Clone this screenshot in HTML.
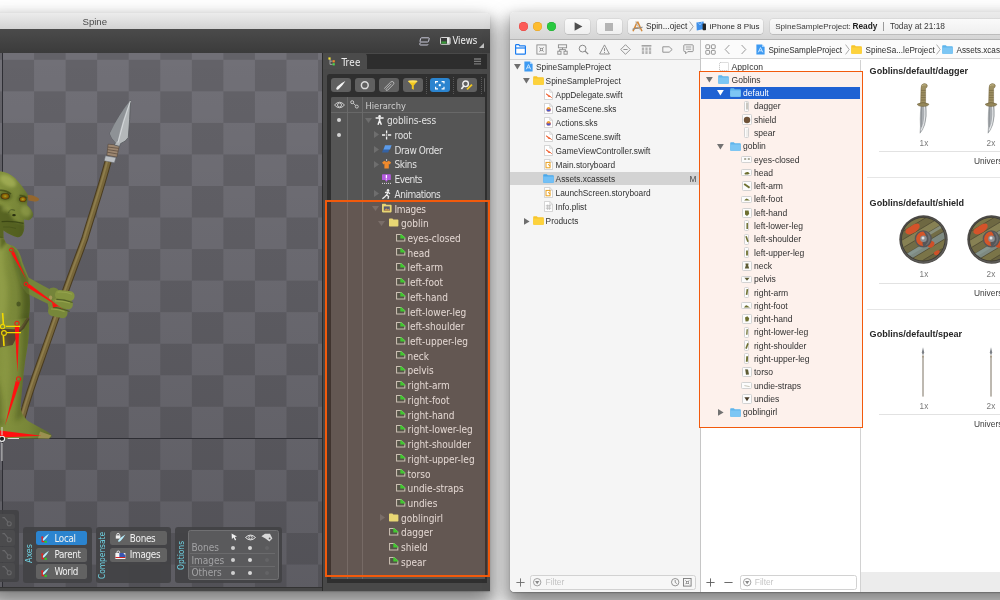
<!DOCTYPE html>
<html><head><meta charset="utf-8"><title>Spine and Xcode</title>
<style>
*{box-sizing:border-box;margin:0;padding:0}
html,body{width:1000px;height:600px;overflow:hidden;background:#fff}
body{position:relative;font-family:"Liberation Sans",sans-serif}
#root{position:absolute;left:0;top:0;width:1000px;height:600px;overflow:hidden;will-change:transform;background:#fff}
.a{position:absolute}
svg{position:absolute;overflow:visible}
.sf{font-family:"DejaVu Sans Condensed","DejaVu Sans",sans-serif}
/* ---------- Spine ---------- */
#spine{left:-10px;top:12.5px;width:500px;height:578px;border-radius:0 4.5px 0 0;background:linear-gradient(#ececec 0 12px,#474747 12px);box-shadow:0 12px 22px 3px rgba(0,0,0,.38),0 7px 12px 4px rgba(0,0,0,.17),0 1px 1.5px rgba(0,0,0,.2)}
#sp-title{left:0;top:12.5px;width:490px;height:16.5px;border-radius:0 4.5px 0 0;background:linear-gradient(#ececec,#d3d3d3);font-size:9.6px;color:#4a4a4a;line-height:17px}
#sp-bar{left:0;top:29px;width:490px;height:24px;background:linear-gradient(#4b4b4b,#3b3b3b)}
#canvas{left:0;top:53px;width:322.5px;height:534px;overflow:hidden;
background:linear-gradient(rgba(0,0,0,0),rgba(4,4,8,.18)),conic-gradient(#717077 25%,#636268 0 50%,#717077 0 75%,#636268 0);background-size:100% 100%,63.12px 63.1px;background-position:0 0,2.5px 6.8px}
#cbot{left:0;top:587px;width:490px;height:3.5px;background:linear-gradient(#333 0 1.2px,#474747 1.2px)}
.pnl{background:rgba(66,66,68,.92);border-radius:3px}
.btn{background:#626262;border-radius:2.5px;color:#f0f0f0;font-size:9.8px;line-height:14px;white-space:nowrap;letter-spacing:-.3px}
.btn.on{background:#2b84cf}
.vt{color:#6fd3e3;font-size:9px;line-height:10px;white-space:nowrap;transform:rotate(-90deg);transform-origin:0 0}
/* tree */
#tp{left:322.2px;top:53px;width:167.8px;height:537.5px;background:#494949;border-left:1px solid #2c2c2c}
#tabbar{left:323.5px;top:53.6px;width:163.6px;height:15.2px;background:#2d2d2d}
#tab{left:323.2px;top:53.4px;width:43.6px;height:15.4px;background:#4b4b4b;border-radius:2px 4px 0 0;color:#eee;font-size:9.8px;line-height:15px;letter-spacing:.3px}
#tin{left:327px;top:73.8px;width:160.4px;height:509.6px;background:#2f2f2f;border-radius:2.5px 0 0 0}
#tbl{left:331.2px;top:97px;width:154px;height:482px;background:#555;border-radius:2px 0 0 0}
#thead{left:331.2px;top:97px;width:154px;height:15.6px;background:#565656;border-bottom:1px solid #686868;border-radius:2px 0 0 0}
.cl{width:1px;top:97.2px;height:481.8px;background:#6a6a6a}
.tb{top:78px;height:14.4px;width:19.6px;background:#606060;border-radius:3px}
.tsep{top:77px;height:17px;width:0;border-left:1px dotted #585858}
.tr{height:14.72px;line-height:14.72px;font-size:10px;color:#e2e2e2;white-space:nowrap;padding-top:1.6px}
.dot{width:4.2px;height:4.2px;border-radius:50%;background:#d4d4d4}

/* ---------- Xcode ---------- */
#xwin{left:509.6px;top:12.2px;width:520px;height:579.8px;border-radius:4.5px;background:#fff;box-shadow:0 12px 22px 3px rgba(0,0,0,.36),0 7px 12px 4px rgba(0,0,0,.17),0 1px 1.5px rgba(0,0,0,.26)}
#xtb{left:509.6px;top:12.2px;width:491px;height:27.6px;border-radius:4.5px 0 0 0;background:linear-gradient(#ebebeb,#d5d5d5);border-bottom:1px solid #b4b4b4}
#xnav{left:509.6px;top:39.8px;width:190.6px;height:552.2px;background:#f5f5f5;border-radius:0 0 0 4.5px}
.xb{top:18.8px;height:15.2px;border-radius:3px;background:linear-gradient(#fafafa,#efefef);box-shadow:0 0 0 .5px rgba(0,0,0,.10),0 .6px .6px rgba(0,0,0,.16)}
.xt{font-size:8.3px;line-height:14px;height:14px;color:#303030;white-space:nowrap;padding-top:.3px}
.xa{font-size:8.55px;line-height:13.3px;height:13.3px;color:#303030;white-space:nowrap;padding-top:.8px}
.xh{font-size:9.05px;font-weight:bold;color:#262626;white-space:nowrap;line-height:12px}
.xs{font-size:8.2px;color:#7a7a7a;white-space:nowrap;line-height:10px}
.xu{font-size:8.4px;color:#3a3a3a;white-space:nowrap;line-height:10px}
.hl{height:1px;background:#e2e2e2}
.flt{height:14.4px;border:1px solid #d2d2d2;border-radius:2.5px;background:#f7f7f7}
</style></head>
<body>
<div id="root">
<div id="spine" class="a"></div>
<div id="sp-title" class="a"><span class="a" style="left:82.5px;top:0">Spine</span></div>
<div id="sp-bar" class="a"></div>
<div id="canvas" class="a">
<svg class="a" style="left:0;top:0" width="323" height="534" viewBox="0 53 323 534"><defs><linearGradient id="sk" x1="0" x2="1" y1="0" y2="0"><stop offset="0" stop-color="#84923e"/><stop offset=".55" stop-color="#788638"/><stop offset="1" stop-color="#5c6a2a"/></linearGradient><linearGradient id="shaft" x1="0" x2="1" y1="0" y2="0"><stop offset="0" stop-color="#5e4c28"/><stop offset=".35" stop-color="#9a8448"/><stop offset="1" stop-color="#6e5a30"/></linearGradient><radialGradient id="eye"><stop offset="0" stop-color="#fff0a0"/><stop offset=".35" stop-color="#ffc000"/><stop offset="1" stop-color="#b05000"/></radialGradient><filter id="bl" x="-30%" y="-30%" width="160%" height="160%"><feGaussianBlur stdDeviation="1.6"/></filter><filter id="bl2" x="-30%" y="-30%" width="160%" height="160%"><feGaussianBlur stdDeviation="2.4"/></filter><clipPath id="hd"><path d="M0 171.2Q8 171.8 15 178Q22 185.4 27.8 194.6L27 205Q32.6 210.6 33.2 214Q33 218.4 28.6 220.2L24 219.6L24.2 224Q24.6 230 23.2 232.4Q21.4 237.4 17.4 237.2Q11 236 3.4 230.6L3.6 238L0 238Z"/></clipPath><clipPath id="bd"><path d="M0 236L3.4 237.6L6 243L12 246L17.6 252L22 266L28.4 279L29.6 296Q30.6 308 28.8 317.6L29 318C30 335 27 350 25 362C23 376 22 392 20.4 406C20.6 412 23 416 28 421C36 426 46 430 50.6 434C53 436.4 51 438.6 47 438.6H0Z"/></clipPath></defs><path d="M2.5 53V587" stroke="#2e2e34" stroke-width="1"/><path d="M0 438.5H322.5" stroke="#2e2e34" stroke-width="1"/><path d="M109 158C100 192 92 214 85 238C80 252 76 262 72.4 272C62 300 50 335 41 360C33 382 27 400 22 418" fill="none" stroke="#4a3c20" stroke-width="7" stroke-linecap="butt"/><path d="M109 158C100 192 92 214 85 238C80 252 76 262 72.4 272C62 300 50 335 41 360C33 382 27 400 22 418" fill="none" stroke="#78673b" stroke-width="5"/><path d="M108.2 158C99.2 192 91.2 214 84.2 238C79.2 252 75.2 262 71.6 272C61.2 300 49.2 335 40.2 360C32.2 382 26.2 400 21.2 418" fill="none" stroke="#8e7d4c" stroke-width="1.8"/><path d="M108.1 144.2L119.4 145.2L116.9 157L106.9 155.2Z" fill="#9c8670" stroke="#4e4034" stroke-width=".5"/><path d="M107.8 147L118.8 148.4M107.5 149.6L118.2 151.2M107.2 152.2L117.6 154" stroke="#5e4e40" stroke-width=".8"/><path d="M105.4 155.8L116 157.6L114.4 162.8L104.2 160.8Z" fill="#bcc0c4" stroke="#60646a" stroke-width=".5"/><path d="M130.6 100Q129.8 120 128.3 137.5Q126 141.6 120.6 143.6L119.6 146.4L114.4 145L115.6 142.4Q111.4 138.6 109.8 133.4Q118 116 130.6 100Z" fill="#b4b8ba" stroke="#54585c" stroke-width=".8" stroke-linejoin="round"/><path d="M130.6 100Q118 116 109.8 133.4Q111.4 138.6 115.6 142.4L117.8 141Q122 120 130.6 100Z" fill="#8e9296"/><path d="M130.4 101Q123 122 118 142.6" stroke="#dcdfe2" stroke-width=".8" fill="none"/><path d="M0 318H29C30 335 27 350 25 362C23 376 22 392 20.4 406C20.6 412 23 416 28 421C36 426 46 430 50.6 434C53 436.4 51 438.6 47 438.6H0Z" fill="url(#sk)"/><path d="M40 431.5L51.4 435.6L49 438.4L38 438.2Z" fill="#9a9050"/><path d="M0 328.6L19 329.4L22.4 325L28.8 315.4L29.4 319.6L24 328.4L19.4 332.6L12.6 345L0 347.4Z" fill="#56482e"/><path d="M28.8 315.4L29.4 317.4L21 329.6L19 329.4Z" fill="#6e5c3c"/><path d="M0 236L3.4 237.6L6 243L12 246L17.6 252L22 266L28.4 279L29.6 296Q30.6 308 28.8 317.6L0 322Z" fill="url(#sk)"/><ellipse cx="18.6" cy="304" rx="2.2" ry="2.6" fill="#4e5a24"/><path d="M11 245Q19 247 22.4 262L28.6 277.4Q38 283 49.4 289L48.4 304Q36 298 27 293.4Q20 286 15 270Z" fill="#75853a"/><path d="M47.6 296Q47 290 50.6 288Q54.6 286.4 57.6 289Q59.6 291 58.8 294.6L58 300L50 312Q47 306 47.6 296Z" fill="#74843a"/><rect x="55" y="290.6" width="19.6" height="9.6" rx="4.4" fill="#84943f" transform="rotate(7 65 295)"/><rect x="52.4" y="298.8" width="20.6" height="9.6" rx="4.4" fill="#7e8e3c" transform="rotate(9 62 303)"/><rect x="48" y="306.6" width="19.6" height="10.6" rx="4.8" fill="#77873a" transform="rotate(12 58 312)"/><path d="M56.4 299.4Q64 299.4 72.6 302.6M53 307.4Q60 307.6 69.6 311.6" fill="none" stroke="#4e5c24" stroke-width="1.1"/><path d="M57.6 292.2Q65 291.4 72 294.2M55 300.8Q62 300.6 70 303M51 309Q58 308.8 64.6 311.6" fill="none" stroke="#98a650" stroke-width="1.2" opacity=".8"/><ellipse cx="50.6" cy="297.6" rx="1.6" ry="2.2" fill="#a89858"/><path d="M0 171.2Q8 171.8 15 178Q22 185.4 27.8 194.6L27 205Q32.6 210.6 33.2 214Q33 218.4 28.6 220.2L24 219.6L24.2 224Q24.6 230 23.2 232.4Q21.4 237.4 17.4 237.2Q11 236 3.4 230.6L3.6 238L0 238Z" fill="url(#sk)"/><path d="M27.6 195Q34 194.4 39 198.8Q39.4 201 36 201.4Q31 201.6 28.4 200.6Z" fill="#94672e"/><path d="M0 190.4Q6 190 11 194M19.6 195.6Q24 195 27 198" fill="none" stroke="#4e5a22" stroke-width="1.6"/><ellipse cx="5.2" cy="196.2" rx="4.6" ry="3.2" fill="#3c3c14"/><ellipse cx="5.2" cy="196.2" rx="3.8" ry="2.7" fill="url(#eye)"/><ellipse cx="22.8" cy="199.2" rx="3.7" ry="2.8" fill="#3c3c14"/><ellipse cx="22.8" cy="199.2" rx="3" ry="2.3" fill="url(#eye)"/><path d="M8.4 213Q10 207.8 15 210.6" fill="none" stroke="#56642a" stroke-width="1.2"/><ellipse cx="14" cy="215.2" rx="1.8" ry="1.1" fill="#2a3010"/><path d="M1.6 221.6Q12 220.6 23.6 223.4" fill="none" stroke="#434f1c" stroke-width="1.1"/><path d="M3 227Q10 226.4 16 228.4" fill="none" stroke="#4e5a22" stroke-width=".8" opacity=".7"/><g clip-path="url(#hd)"><path d="M-4 204Q6 206 10 214Q14 224 24 223L26 240L-4 242Z" fill="#34400f" opacity=".55" filter="url(#bl)"/><ellipse cx="5" cy="196" rx="7" ry="4.6" fill="#34400f" opacity=".5" filter="url(#bl)"/><ellipse cx="22.6" cy="199" rx="5" ry="3.6" fill="#34400f" opacity=".45" filter="url(#bl)"/><ellipse cx="8" cy="181" rx="9" ry="5" fill="#aab65c" opacity=".7" filter="url(#bl)" transform="rotate(30 8 181)"/><ellipse cx="26" cy="211" rx="5" ry="6" fill="#9aa650" opacity=".6" filter="url(#bl)" transform="rotate(-30 26 211)"/><ellipse cx="6" cy="209" rx="4.6" ry="3" fill="#98a44e" opacity=".5" filter="url(#bl)"/></g><g clip-path="url(#bd)"><path d="M-4 240L4 240Q2 262 7 282Q9 300 5 320L-4 322Z" fill="#a4b058" opacity=".4" filter="url(#bl2)"/><path d="M13 246L22 266L29.6 282Q32 308 30 320L21 320Q25 300 21 284Q16 268 11 250Z" fill="#34400f" opacity=".4" filter="url(#bl2)"/><path d="M31 318Q31 350 26 380Q24 400 23 416L15 422Q18 400 20 380Q22 350 22 318Z" fill="#34400f" opacity=".38" filter="url(#bl2)"/><path d="M-4 376Q6 400 3 424L-4 428Z" fill="#34400f" opacity=".4" filter="url(#bl2)"/><path d="M2 330Q12 350 10 376Q6 400 8 420L0 420Z" fill="#98a44e" opacity=".35" filter="url(#bl2)"/><path d="M0 236L8 240Q4 246 0 250Z" fill="#34400f" opacity=".5" filter="url(#bl)"/></g><path d="M11.1 253.0L26.6 280.0L14.0 251.5Z" fill="#ff1010"/><circle cx="11.4" cy="250" r="1.9" fill="none" stroke="#ff1010" stroke-width="1"/><path d="M27.0 286.9L64.0 310.0L29.1 283.9Z" fill="#ff1010"/><circle cx="26" cy="284" r="1.9" fill="none" stroke="#ff1010" stroke-width="1"/><path d="M52 302.6L58.4 306.2L53 307.6Z" fill="#ff1010"/><path d="M14.7 326.2L17.4 372.0L19.3 326.2Z" fill="#ff1010"/><circle cx="17" cy="323.4" r="2.2" fill="none" stroke="#ff1010" stroke-width="1"/><path d="M15.7 381.1L5.0 425.6L19.9 382.3Z" fill="#ff1010"/><circle cx="18.6" cy="379" r="2.2" fill="none" stroke="#ff1010" stroke-width="1"/><path d="M0 430.6L41.6 435.8L0 437.6Z" fill="#ff1010"/><path d="M2.6 313L3.4 324M3.4 336L4 346" stroke="#f2d800" stroke-width="1.6"/><path d="M6 326.4H20M7 332.6H21" stroke="#f2d800" stroke-width="1.2"/><circle cx="2.6" cy="326.6" r="2.2" fill="none" stroke="#f2d800" stroke-width="1.1"/><circle cx="4" cy="333" r="2.4" fill="none" stroke="#f2d800" stroke-width="1.1"/><path d="M2 427V435M2 443V461M7.6 438.5H19" stroke="#d8d8d8" stroke-width="1"/><circle cx="2" cy="438.8" r="2.6" fill="#222" stroke="#f4f4f4" stroke-width="1.1"/></svg>
</div>
<div id="cbot" class="a"></div>
<div id="tp" class="a"></div><div id="tabbar" class="a"></div>
<div id="tab" class="a sf"><span class="a" style="left:18.2px;top:1.2px">Tree</span></div>
<div id="tin" class="a"></div>
<div class="tb a" style="left:331.3px"></div><div class="tb a" style="left:355px"></div><div class="tb a" style="left:379px"></div><div class="tb a" style="left:403px"></div><div class="tb a" style="left:430px;background:#2b84cf"></div><div class="tb a" style="left:457px"></div><div class="tb a" style="left:483.7px;width:1.8px;border-radius:3px 0 0 3px"></div><div class="tsep a" style="left:426px"></div><div class="tsep a" style="left:453.4px"></div><div class="tsep a" style="left:480.6px"></div>
<div id="tbl" class="a"></div><div id="thead" class="a"></div>
<div class="cl a" style="left:347px"></div><div class="cl a" style="left:362.3px"></div>
<div class="tr sf a" style="left:365.5px;top:97.4px;color:#d0d0d0;font-size:9.3px">Hierarchy</div>
<div class="dot a" style="left:337.1px;top:118.30px"></div><svg class="a" style="left:364.5px;top:118.0px" width="7" height="5" viewBox="0 0 7 5"><path d="M0 0H7L3.5 5Z" fill="#6e6e6e"/></svg><svg class="a" style="left:375px;top:115.0px" width="10" height="10" viewBox="0 0 10 10"><circle cx="4.6" cy="1.3" r="1.25" fill="#f2f2f2"/><path d="M0.6 3.1H8.6M4.6 2.6V6M4.6 5.6L3 9.8M4.6 5.6L6.4 9.8" stroke="#f2f2f2" stroke-width="1.5" fill="none"/></svg><div class="tr sf a" style="left:387px;top:112.64px;letter-spacing:-0.14px">goblins-ess</div>
<div class="dot a" style="left:337.1px;top:133.02px"></div><svg class="a" style="left:373.5px;top:131.22px" width="5" height="7" viewBox="0 0 5 7"><path d="M0 0L5 3.5L0 7Z" fill="#6e6e6e"/></svg><svg class="a" style="left:382px;top:129.72px" width="10" height="10" viewBox="0 0 10 10"><path d="M0 5H3.2M6 5H9.2M4.6 0.4V3.4M4.6 6.6V9.6" stroke="#f4f4f4" stroke-width="1.3"/><rect x="4" y="4.4" width="1.2" height="1.2" fill="#f4f4f4"/></svg><div class="tr sf a" style="left:394.5px;top:127.36px;letter-spacing:-0.25px">root</div>
<svg class="a" style="left:373.5px;top:145.94000000000003px" width="5" height="7" viewBox="0 0 5 7"><path d="M0 0L5 3.5L0 7Z" fill="#6e6e6e"/></svg><svg class="a" style="left:382px;top:144.44px" width="10" height="10" viewBox="0 0 10 10"><path d="M1.4 4.6L0 8.4H6.2L7.6 4.6Z" fill="#3462a4"/><path d="M3 1.2L1.6 5.6H8L9.6 1.2Z" fill="#5b9bea"/></svg><div class="tr sf a" style="left:394.5px;top:142.08px;letter-spacing:-0.42px">Draw Order</div>
<svg class="a" style="left:373.5px;top:160.66000000000003px" width="5" height="7" viewBox="0 0 5 7"><path d="M0 0L5 3.5L0 7Z" fill="#6e6e6e"/></svg><svg class="a" style="left:382px;top:159.16px" width="10" height="10" viewBox="0 0 10 10"><path d="M4.6 0V2" stroke="#ddd" stroke-width=".8"/><path d="M0.2 3.2L2.6 1.8Q4.6 3.6 6.6 1.8L9 3.2L8 5.4L6.8 4.8V9.4H2.4V4.8L1.2 5.4Z" fill="#f08a2c"/></svg><div class="tr sf a" style="left:394.5px;top:156.80px;letter-spacing:-0.36px">Skins</div>
<svg class="a" style="left:382px;top:173.88px" width="10" height="10" viewBox="0 0 10 10"><path d="M0.6 0.2H8.2Q8.8 .2 8.8 .8V5.4Q8.8 6 8.2 6H5.8L4.4 8L3 6H0.6Q0 6 0 5.4V.8Q0 .2 .6 .2Z" fill="#b45be0"/><path d="M4.4 1V4" stroke="#fff" stroke-width="1.3"/><rect x="3.8" y="4.6" width="1.2" height="1" fill="#fff"/><path d="M0 9.4H9.4" stroke="#ddd" stroke-width="1" stroke-dasharray="1 1"/></svg><div class="tr sf a" style="left:394.5px;top:171.52px;letter-spacing:-0.5px">Events</div>
<svg class="a" style="left:373.5px;top:190.10000000000002px" width="5" height="7" viewBox="0 0 5 7"><path d="M0 0L5 3.5L0 7Z" fill="#6e6e6e"/></svg><svg class="a" style="left:382px;top:188.6px" width="10" height="10" viewBox="0 0 10 10"><circle cx="6" cy="1.2" r="1.2" fill="#f0f0f0"/><path d="M6.6 2.4L4.6 5.8L6.6 7.4L6 9.8M4.6 5.8L2.6 8L0.4 9.8M3 3.6L5.8 3L8 4.8" stroke="#f0f0f0" stroke-width="1.25" fill="none"/></svg><div class="tr sf a" style="left:394.5px;top:186.24px;letter-spacing:-0.48px">Animations</div>
<svg class="a" style="left:372.0px;top:206.32000000000002px" width="7" height="5" viewBox="0 0 7 5"><path d="M0 0H7L3.5 5Z" fill="#6e6e6e"/></svg><svg class="a" style="left:382px;top:203.32px" width="10" height="10" viewBox="0 0 10 10"><path d="M0 1.6Q0 .8 .8 .8H3.4L4.4 1.8H8.8Q9.6 1.8 9.6 2.6V8.6Q9.6 9.4 8.8 9.4H.8Q0 9.4 0 8.6Z" fill="#e6e07a"/><rect x="1.8" y="3.4" width="6" height="4.4" fill="#4b5a78"/><path d="M1.8 7.8L4.2 5.2L5.6 6.6L6.6 5.8L7.8 7.8Z" fill="#c89a4a"/></svg><div class="tr sf a" style="left:394.5px;top:200.96px;letter-spacing:-0.3px">Images</div>
<svg class="a" style="left:378.0px;top:221.04000000000002px" width="7" height="5" viewBox="0 0 7 5"><path d="M0 0H7L3.5 5Z" fill="#6e6e6e"/></svg><svg class="a" style="left:388.6px;top:218.24px" width="9.4" height="8.6" viewBox="0 0 10 9"><path d="M0 1.2Q0 .4 .8 .4H3.6L4.6 1.4H9.2Q10 1.4 10 2.2V8.2Q10 9 9.2 9H.8Q0 9 0 8.2Z" fill="#e6e07a"/></svg><div class="tr sf a" style="left:401px;top:215.68px">goblin</div>
<svg class="a" style="left:395.6px;top:233.56px" width="9.4" height="7.6" viewBox="0 0 10 8"><path d="M0.6 0.6H5.2L9.4 4.2V7.4H0.6Z" fill="#46524a" stroke="#c8c8c0" stroke-width="1.1"/><path d="M4.6 0.2H5.6L9.8 3.9V4.8H4.6Z" fill="#2fd02f"/></svg><div class="tr sf a" style="left:407.5px;top:230.40px">eyes-closed</div>
<svg class="a" style="left:395.6px;top:248.28px" width="9.4" height="7.6" viewBox="0 0 10 8"><path d="M0.6 0.6H5.2L9.4 4.2V7.4H0.6Z" fill="#46524a" stroke="#c8c8c0" stroke-width="1.1"/><path d="M4.6 0.2H5.6L9.8 3.9V4.8H4.6Z" fill="#2fd02f"/></svg><div class="tr sf a" style="left:407.5px;top:245.12px">head</div>
<svg class="a" style="left:395.6px;top:263.0px" width="9.4" height="7.6" viewBox="0 0 10 8"><path d="M0.6 0.6H5.2L9.4 4.2V7.4H0.6Z" fill="#46524a" stroke="#c8c8c0" stroke-width="1.1"/><path d="M4.6 0.2H5.6L9.8 3.9V4.8H4.6Z" fill="#2fd02f"/></svg><div class="tr sf a" style="left:407.5px;top:259.84px">left-arm</div>
<svg class="a" style="left:395.6px;top:277.72px" width="9.4" height="7.6" viewBox="0 0 10 8"><path d="M0.6 0.6H5.2L9.4 4.2V7.4H0.6Z" fill="#46524a" stroke="#c8c8c0" stroke-width="1.1"/><path d="M4.6 0.2H5.6L9.8 3.9V4.8H4.6Z" fill="#2fd02f"/></svg><div class="tr sf a" style="left:407.5px;top:274.56px">left-foot</div>
<svg class="a" style="left:395.6px;top:292.44px" width="9.4" height="7.6" viewBox="0 0 10 8"><path d="M0.6 0.6H5.2L9.4 4.2V7.4H0.6Z" fill="#46524a" stroke="#c8c8c0" stroke-width="1.1"/><path d="M4.6 0.2H5.6L9.8 3.9V4.8H4.6Z" fill="#2fd02f"/></svg><div class="tr sf a" style="left:407.5px;top:289.28px">left-hand</div>
<svg class="a" style="left:395.6px;top:307.16px" width="9.4" height="7.6" viewBox="0 0 10 8"><path d="M0.6 0.6H5.2L9.4 4.2V7.4H0.6Z" fill="#46524a" stroke="#c8c8c0" stroke-width="1.1"/><path d="M4.6 0.2H5.6L9.8 3.9V4.8H4.6Z" fill="#2fd02f"/></svg><div class="tr sf a" style="left:407.5px;top:304.00px">left-lower-leg</div>
<svg class="a" style="left:395.6px;top:321.88px" width="9.4" height="7.6" viewBox="0 0 10 8"><path d="M0.6 0.6H5.2L9.4 4.2V7.4H0.6Z" fill="#46524a" stroke="#c8c8c0" stroke-width="1.1"/><path d="M4.6 0.2H5.6L9.8 3.9V4.8H4.6Z" fill="#2fd02f"/></svg><div class="tr sf a" style="left:407.5px;top:318.72px">left-shoulder</div>
<svg class="a" style="left:395.6px;top:336.6px" width="9.4" height="7.6" viewBox="0 0 10 8"><path d="M0.6 0.6H5.2L9.4 4.2V7.4H0.6Z" fill="#46524a" stroke="#c8c8c0" stroke-width="1.1"/><path d="M4.6 0.2H5.6L9.8 3.9V4.8H4.6Z" fill="#2fd02f"/></svg><div class="tr sf a" style="left:407.5px;top:333.44px">left-upper-leg</div>
<svg class="a" style="left:395.6px;top:351.32px" width="9.4" height="7.6" viewBox="0 0 10 8"><path d="M0.6 0.6H5.2L9.4 4.2V7.4H0.6Z" fill="#46524a" stroke="#c8c8c0" stroke-width="1.1"/><path d="M4.6 0.2H5.6L9.8 3.9V4.8H4.6Z" fill="#2fd02f"/></svg><div class="tr sf a" style="left:407.5px;top:348.16px">neck</div>
<svg class="a" style="left:395.6px;top:366.04px" width="9.4" height="7.6" viewBox="0 0 10 8"><path d="M0.6 0.6H5.2L9.4 4.2V7.4H0.6Z" fill="#46524a" stroke="#c8c8c0" stroke-width="1.1"/><path d="M4.6 0.2H5.6L9.8 3.9V4.8H4.6Z" fill="#2fd02f"/></svg><div class="tr sf a" style="left:407.5px;top:362.88px">pelvis</div>
<svg class="a" style="left:395.6px;top:380.76px" width="9.4" height="7.6" viewBox="0 0 10 8"><path d="M0.6 0.6H5.2L9.4 4.2V7.4H0.6Z" fill="#46524a" stroke="#c8c8c0" stroke-width="1.1"/><path d="M4.6 0.2H5.6L9.8 3.9V4.8H4.6Z" fill="#2fd02f"/></svg><div class="tr sf a" style="left:407.5px;top:377.60px">right-arm</div>
<svg class="a" style="left:395.6px;top:395.48px" width="9.4" height="7.6" viewBox="0 0 10 8"><path d="M0.6 0.6H5.2L9.4 4.2V7.4H0.6Z" fill="#46524a" stroke="#c8c8c0" stroke-width="1.1"/><path d="M4.6 0.2H5.6L9.8 3.9V4.8H4.6Z" fill="#2fd02f"/></svg><div class="tr sf a" style="left:407.5px;top:392.32px">right-foot</div>
<svg class="a" style="left:395.6px;top:410.2px" width="9.4" height="7.6" viewBox="0 0 10 8"><path d="M0.6 0.6H5.2L9.4 4.2V7.4H0.6Z" fill="#46524a" stroke="#c8c8c0" stroke-width="1.1"/><path d="M4.6 0.2H5.6L9.8 3.9V4.8H4.6Z" fill="#2fd02f"/></svg><div class="tr sf a" style="left:407.5px;top:407.04px">right-hand</div>
<svg class="a" style="left:395.6px;top:424.92px" width="9.4" height="7.6" viewBox="0 0 10 8"><path d="M0.6 0.6H5.2L9.4 4.2V7.4H0.6Z" fill="#46524a" stroke="#c8c8c0" stroke-width="1.1"/><path d="M4.6 0.2H5.6L9.8 3.9V4.8H4.6Z" fill="#2fd02f"/></svg><div class="tr sf a" style="left:407.5px;top:421.76px">right-lower-leg</div>
<svg class="a" style="left:395.6px;top:439.64px" width="9.4" height="7.6" viewBox="0 0 10 8"><path d="M0.6 0.6H5.2L9.4 4.2V7.4H0.6Z" fill="#46524a" stroke="#c8c8c0" stroke-width="1.1"/><path d="M4.6 0.2H5.6L9.8 3.9V4.8H4.6Z" fill="#2fd02f"/></svg><div class="tr sf a" style="left:407.5px;top:436.48px">right-shoulder</div>
<svg class="a" style="left:395.6px;top:454.36px" width="9.4" height="7.6" viewBox="0 0 10 8"><path d="M0.6 0.6H5.2L9.4 4.2V7.4H0.6Z" fill="#46524a" stroke="#c8c8c0" stroke-width="1.1"/><path d="M4.6 0.2H5.6L9.8 3.9V4.8H4.6Z" fill="#2fd02f"/></svg><div class="tr sf a" style="left:407.5px;top:451.20px">right-upper-leg</div>
<svg class="a" style="left:395.6px;top:469.08px" width="9.4" height="7.6" viewBox="0 0 10 8"><path d="M0.6 0.6H5.2L9.4 4.2V7.4H0.6Z" fill="#46524a" stroke="#c8c8c0" stroke-width="1.1"/><path d="M4.6 0.2H5.6L9.8 3.9V4.8H4.6Z" fill="#2fd02f"/></svg><div class="tr sf a" style="left:407.5px;top:465.92px">torso</div>
<svg class="a" style="left:395.6px;top:483.8px" width="9.4" height="7.6" viewBox="0 0 10 8"><path d="M0.6 0.6H5.2L9.4 4.2V7.4H0.6Z" fill="#46524a" stroke="#c8c8c0" stroke-width="1.1"/><path d="M4.6 0.2H5.6L9.8 3.9V4.8H4.6Z" fill="#2fd02f"/></svg><div class="tr sf a" style="left:407.5px;top:480.64px">undie-straps</div>
<svg class="a" style="left:395.6px;top:498.52px" width="9.4" height="7.6" viewBox="0 0 10 8"><path d="M0.6 0.6H5.2L9.4 4.2V7.4H0.6Z" fill="#46524a" stroke="#c8c8c0" stroke-width="1.1"/><path d="M4.6 0.2H5.6L9.8 3.9V4.8H4.6Z" fill="#2fd02f"/></svg><div class="tr sf a" style="left:407.5px;top:495.36px">undies</div>
<svg class="a" style="left:379.5px;top:513.9399999999999px" width="5" height="7" viewBox="0 0 5 7"><path d="M0 0L5 3.5L0 7Z" fill="#6e6e6e"/></svg><svg class="a" style="left:388.6px;top:512.64px" width="9.4" height="8.6" viewBox="0 0 10 9"><path d="M0 1.2Q0 .4 .8 .4H3.6L4.6 1.4H9.2Q10 1.4 10 2.2V8.2Q10 9 9.2 9H.8Q0 9 0 8.2Z" fill="#e6e07a"/></svg><div class="tr sf a" style="left:401px;top:510.08px">goblingirl</div>
<svg class="a" style="left:388.6px;top:527.96px" width="9.4" height="7.6" viewBox="0 0 10 8"><path d="M0.6 0.6H5.2L9.4 4.2V7.4H0.6Z" fill="#46524a" stroke="#c8c8c0" stroke-width="1.1"/><path d="M4.6 0.2H5.6L9.8 3.9V4.8H4.6Z" fill="#2fd02f"/></svg><div class="tr sf a" style="left:401px;top:524.80px">dagger</div>
<svg class="a" style="left:388.6px;top:542.68px" width="9.4" height="7.6" viewBox="0 0 10 8"><path d="M0.6 0.6H5.2L9.4 4.2V7.4H0.6Z" fill="#46524a" stroke="#c8c8c0" stroke-width="1.1"/><path d="M4.6 0.2H5.6L9.8 3.9V4.8H4.6Z" fill="#2fd02f"/></svg><div class="tr sf a" style="left:401px;top:539.52px">shield</div>
<svg class="a" style="left:388.6px;top:557.4px" width="9.4" height="7.6" viewBox="0 0 10 8"><path d="M0.6 0.6H5.2L9.4 4.2V7.4H0.6Z" fill="#46524a" stroke="#c8c8c0" stroke-width="1.1"/><path d="M4.6 0.2H5.6L9.8 3.9V4.8H4.6Z" fill="#2fd02f"/></svg><div class="tr sf a" style="left:401px;top:554.24px">spear</div>
<div class="a" style="left:325.1px;top:199.9px;width:165.4px;height:377.4px;border:2.1px solid #f25a0c;background:rgba(255,120,60,.085)"></div>
<svg class="a" style="left:331.3px;top:78px" width="19.6" height="14.4" viewBox="0 0 19.6 14.4"><path d="M5.6 11.6Q4.4 10.4 6.4 8.4Q10 5 14.4 3Q11.6 7.6 8.4 10.6Q6.6 12.4 5.6 11.6Z" fill="#f4f4f4"/></svg><svg class="a" style="left:355px;top:78px" width="19.6" height="14.4" viewBox="0 0 19.6 14.4"><circle cx="9.8" cy="7.2" r="3.4" fill="none" stroke="#dcdcdc" stroke-width="1.5"/></svg><svg class="a" style="left:379px;top:78px" width="19.6" height="14.4" viewBox="0 0 19.6 14.4"><path d="M5.2 10.6L11.6 4.2Q13.2 2.8 14.4 4Q15.6 5.2 14.2 6.6L8.6 12.2Q7.8 12.8 7.2 12.2Q6.6 11.6 7.4 10.8L12.4 5.8" fill="none" stroke="#b8b8b8" stroke-width="1"/></svg><svg class="a" style="left:403px;top:78px" width="19.6" height="14.4" viewBox="0 0 19.6 14.4"><path d="M5.2 3.2H14.4L10.8 7.4V11.8L8.8 10.8V7.4Z" fill="#f2c81e"/><ellipse cx="9.8" cy="3.4" rx="4.6" ry="1.1" fill="#ffe15a"/></svg><svg class="a" style="left:430px;top:78px" width="19.6" height="14.4" viewBox="0 0 19.6 14.4"><path d="M5.6 5.6V3.6H8M11.6 3.6H14V5.6M14 8.8V10.8H11.6M8 10.8H5.6V8.8" fill="none" stroke="#fff" stroke-width="1.2"/><rect x="8.8" y="6.2" width="2" height="2" fill="#fff"/></svg><svg class="a" style="left:457px;top:78px" width="19.6" height="14.4" viewBox="0 0 19.6 14.4"><circle cx="8.6" cy="5.8" r="2.8" fill="none" stroke="#f0f0f0" stroke-width="1.4"/><path d="M6.8 8L4.4 11" stroke="#f0f0f0" stroke-width="1.6"/><path d="M10 11.4L15 6.6" stroke="#f2c81e" stroke-width="1.8"/></svg><svg class="a" style="left:334px;top:100.6px" width="11" height="8" viewBox="0 0 11 8"><path d="M.5 4Q5.5 -1.6 10.5 4Q5.5 9.6 .5 4Z" fill="none" stroke="#c8c8c8" stroke-width="1"/><circle cx="5.5" cy="4" r="2" fill="none" stroke="#c8c8c8" stroke-width="1"/></svg><svg class="a" style="left:350.4px;top:100.4px" width="9" height="9" viewBox="0 0 9 9"><circle cx="2.2" cy="2.2" r="1.5" fill="none" stroke="#c8c8c8" stroke-width="1"/><circle cx="6.8" cy="6.6" r="1.5" fill="none" stroke="#c8c8c8" stroke-width="1"/><path d="M3.2 3.2L5.8 5.6" stroke="#c8c8c8" stroke-width="1"/></svg>
<svg class="a" style="left:327.5px;top:57.4px" width="9" height="9" viewBox="0 0 9 9"><path d="M2 2V7.4H4.6M2 4.2H4.6" fill="none" stroke="#a8a8a8" stroke-width=".9"/><rect x=".4" y=".4" width="2.2" height="2.2" fill="#f2e23a"/><rect x="4.6" y="3.2" width="2.2" height="2.2" fill="#f08a2c"/><rect x="4.6" y="6.2" width="2.2" height="2.2" fill="#4fd24f"/></svg><svg class="a" style="left:474px;top:57.6px" width="7" height="7" viewBox="0 0 7 7"><path d="M0 1H7M0 3.4H7M0 5.8H7" stroke="#7a7a7a" stroke-width="1.3"/></svg>
<svg class="a" style="left:418.6px;top:36.8px" width="11" height="9" viewBox="0 0 11 9"><path d="M2.6 .8H9.6Q10.4 .8 10.2 1.6L9.6 4.2Q9.4 5 8.6 5H1.6Q.8 5 1 4.2L1.6 1.6Q1.8 .8 2.6 .8ZM1.2 5.6L.8 7.2Q.6 8 1.4 8H8.2Q9 8 9.2 7.2" fill="none" stroke="#c8c8d8" stroke-width="1"/></svg><svg class="a" style="left:440px;top:37.4px" width="11" height="8" viewBox="0 0 11 8"><rect x=".5" y=".5" width="9.6" height="6.8" rx=".8" fill="#3a3a3a" stroke="#d8d8d8" stroke-width="1"/><rect x="1.4" y="4.4" width="5" height="2.2" fill="#3a9a3a"/><rect x="7" y="1" width="2.6" height="5.8" fill="#e8e8e8"/></svg><div class="a sf" style="left:452.4px;top:34.2px;font-size:9.6px;line-height:13px;color:#f2f2f2">Views</div><svg class="a" style="left:479px;top:42.6px" width="5" height="5" viewBox="0 0 5 5"><path d="M5 0V5H0Z" fill="#c0c0c0"/></svg>
<div class="pnl a" style="left:-4px;top:510.2px;width:22.7px;height:71.6px"></div><div class="a" style="left:-3px;top:513.6px;width:17.7px;height:15.4px;background:#4b4b4d;border-radius:2.5px"></div><svg class="a" style="left:2.4px;top:516.6px" width="10" height="10" viewBox="0 0 10 10"><path d="M.4 .6H2.4L6.2 5.4" fill="none" stroke="#68686a" stroke-width="1.1"/><circle cx="7.2" cy="6.8" r="2" fill="none" stroke="#68686a" stroke-width="1.1"/></svg><div class="a" style="left:-3px;top:530.2px;width:17.7px;height:15.4px;background:#4b4b4d;border-radius:2.5px"></div><svg class="a" style="left:2.4px;top:533.2px" width="10" height="10" viewBox="0 0 10 10"><path d="M.4 .6H2.4L6.2 5.4" fill="none" stroke="#68686a" stroke-width="1.1"/><circle cx="7.2" cy="6.8" r="2" fill="none" stroke="#68686a" stroke-width="1.1"/></svg><div class="a" style="left:-3px;top:546.8px;width:17.7px;height:15.4px;background:#4b4b4d;border-radius:2.5px"></div><svg class="a" style="left:2.4px;top:549.8px" width="10" height="10" viewBox="0 0 10 10"><path d="M.4 .6H2.4L6.2 5.4" fill="none" stroke="#68686a" stroke-width="1.1"/><circle cx="7.2" cy="6.8" r="2" fill="none" stroke="#68686a" stroke-width="1.1"/></svg><div class="a" style="left:-3px;top:563.4px;width:17.7px;height:15.4px;background:#4b4b4d;border-radius:2.5px"></div><svg class="a" style="left:2.4px;top:566.4px" width="10" height="10" viewBox="0 0 10 10"><path d="M.4 .6H2.4L6.2 5.4" fill="none" stroke="#68686a" stroke-width="1.1"/><circle cx="7.2" cy="6.8" r="2" fill="none" stroke="#68686a" stroke-width="1.1"/></svg>
<div class="pnl a" style="left:23.3px;top:526.8px;width:68.4px;height:55.8px"></div><div class="pnl a" style="left:96.2px;top:526.8px;width:75px;height:55.8px"></div><div class="pnl a" style="left:175.4px;top:526.8px;width:106.8px;height:55.8px"></div>
<div class="vt sf a" style="left:24.4px;top:563px;font-size:8.8px">Axes</div><div class="vt sf a" style="left:97px;top:578.8px;font-size:8.3px">Compensate</div><div class="vt sf a" style="left:176.2px;top:569.8px;font-size:8.4px">Options</div>
<div class="btn sf a on" style="left:36.2px;top:531px;width:51.2px;height:14.4px"><span class="a" style="left:18.2px;top:.6px">Local</span></div><svg class="a" style="left:41.4px;top:533.4px" width="9" height="10" viewBox="0 0 9 10"><path d="M1.6 7.4Q1 6.6 2.4 5.2Q5 2.6 8 .8Q6.4 4 4 6.6Q2.4 8.2 1.6 7.4Z" fill="#b8f0ff"/><path d="M1.2 4.4V8.6H4.6" fill="none" stroke="#e02020" stroke-width="1.2"/><rect x="3.4" y="7.8" width="2.4" height="2" fill="#28d028"/><rect x=".4" y="3.4" width="1.8" height="1.8" fill="#f02020"/></svg><div class="btn sf a" style="left:36.2px;top:547.9px;width:51.2px;height:14.4px"><span class="a" style="left:18.2px;top:.6px">Parent</span></div><svg class="a" style="left:41.4px;top:550.3px" width="9" height="10" viewBox="0 0 9 10"><path d="M1.6 7.4Q1 6.6 2.4 5.2Q5 2.6 8 .8Q6.4 4 4 6.6Q2.4 8.2 1.6 7.4Z" fill="#b8f0ff"/><path d="M1.2 4.4V8.6H4.6" fill="none" stroke="#e02020" stroke-width="1.2"/><rect x="3.4" y="7.8" width="2.4" height="2" fill="#28d028"/><rect x=".4" y="3.4" width="1.8" height="1.8" fill="#f02020"/></svg><div class="btn sf a" style="left:36.2px;top:564.4px;width:51.2px;height:14.4px"><span class="a" style="left:18.2px;top:.6px">World</span></div><svg class="a" style="left:41.4px;top:566.8px" width="9" height="10" viewBox="0 0 9 10"><path d="M1.6 7.4Q1 6.6 2.4 5.2Q5 2.6 8 .8Q6.4 4 4 6.6Q2.4 8.2 1.6 7.4Z" fill="#b8f0ff"/><path d="M1.2 4.4V8.6H4.6" fill="none" stroke="#e02020" stroke-width="1.2"/><rect x="3.4" y="7.8" width="2.4" height="2" fill="#28d028"/><rect x=".4" y="3.4" width="1.8" height="1.8" fill="#f02020"/></svg>
<div class="btn sf a" style="left:110px;top:531px;width:56.6px;height:14.4px"><span class="a" style="left:19.8px;top:.6px">Bones</span></div><div class="btn sf a" style="left:110px;top:547.9px;width:56.6px;height:14.4px"><span class="a" style="left:19.8px;top:.6px">Images</span></div><svg class="a" style="left:114.6px;top:532.6px" width="12" height="11" viewBox="0 0 12 11"><path d="M3.2 8.6Q2.6 7.8 4 6.4Q6.6 3.8 10.4 1.6Q8.4 5 6 7.6Q4.2 9.4 3.2 8.6Z" fill="#b8f0ff"/><rect x=".8" y="2.4" width="4.6" height="3.2" fill="#f0f0f0"/><path d="M1.8 2.4V1.6Q1.8 .4 3.1 .4Q4.4 .4 4.4 1.6V2.4" fill="none" stroke="#f0f0f0" stroke-width=".9"/></svg><svg class="a" style="left:114.6px;top:550px" width="12" height="10" viewBox="0 0 12 10"><rect x=".4" y="3" width="10" height="6" fill="#f4f4f4"/><path d="M4.4 3L8.4 3L10.4 5.4V7H4.4Z" fill="#3a56b0"/><rect x=".4" y="7" width="10" height="1" fill="#d02020"/><path d="M2 3V2.2Q2 1 3.3 1Q4.6 1 4.6 2.2V3" fill="none" stroke="#f0f0f0" stroke-width=".9"/></svg>
<div class="a" style="left:188.4px;top:530px;width:90.6px;height:49.6px;background:#5a5a5c;border:1px solid #707072;border-radius:2.5px"></div><div class="a" style="left:190px;top:553.4px;width:84.6px;height:1px;background:#6a6a6c"></div><div class="a" style="left:190px;top:566px;width:84.6px;height:1px;background:#6a6a6c"></div><div class="sf a" style="left:191.4px;top:541px;font-size:10px;line-height:13px;color:#a2a2a4">Bones</div><div class="a" style="left:231.2px;top:545.6px;width:4.2px;height:4.2px;border-radius:50%;background:#cfcfcf"></div><div class="a" style="left:248.2px;top:545.6px;width:4.2px;height:4.2px;border-radius:50%;background:#d8d8d8"></div><div class="a" style="left:265.20000000000005px;top:545.6px;width:4.2px;height:4.2px;border-radius:50%;background:#646466"></div><div class="sf a" style="left:191.4px;top:553.6px;font-size:10px;line-height:13px;color:#a2a2a4">Images</div><div class="a" style="left:231.2px;top:558.2px;width:4.2px;height:4.2px;border-radius:50%;background:#cfcfcf"></div><div class="a" style="left:248.2px;top:558.2px;width:4.2px;height:4.2px;border-radius:50%;background:#d8d8d8"></div><div class="a" style="left:265.20000000000005px;top:558.2px;width:4.2px;height:4.2px;border-radius:50%;background:#646466"></div><div class="sf a" style="left:191.4px;top:566.2px;font-size:10px;line-height:13px;color:#a2a2a4">Others</div><div class="a" style="left:231.2px;top:570.8000000000001px;width:4.2px;height:4.2px;border-radius:50%;background:#cfcfcf"></div><div class="a" style="left:248.2px;top:570.8000000000001px;width:4.2px;height:4.2px;border-radius:50%;background:#d8d8d8"></div><div class="a" style="left:265.20000000000005px;top:570.8000000000001px;width:4.2px;height:4.2px;border-radius:50%;background:#646466"></div><svg class="a" style="left:230.6px;top:533px" width="7" height="8" viewBox="0 0 7 8"><path d="M.6 .4L6 3.4L3.8 4L5.2 6.8L4 7.4L2.6 4.6L.9 6Z" fill="#f0f0f0"/></svg><svg class="a" style="left:245px;top:533.6px" width="11" height="7" viewBox="0 0 11 7"><path d="M.5 3.5Q5.5 -1.4 10.5 3.5Q5.5 8.4 .5 3.5Z" fill="none" stroke="#e0e0e0" stroke-width="1"/><circle cx="5.5" cy="3.5" r="1.7" fill="none" stroke="#e0e0e0" stroke-width="1"/></svg><svg class="a" style="left:261px;top:532.8px" width="12" height="9" viewBox="0 0 12 9"><path d="M.4 3.2L4 .8L9 .8L11.4 5.6L8.4 8.4L4.4 5.4Z" fill="#d8d8d8"/><circle cx="8.6" cy="5.4" r=".9" fill="#555"/></svg>
<div id="xwin" class="a"></div><div id="xnav" class="a"></div><div id="xtb" class="a"></div>
<div class="a" style="left:518.9px;top:22px;width:9px;height:9px;border-radius:50%;background:#fc5b57;box-shadow:inset 0 0 0 .5px #e2443f"></div><div class="a" style="left:532.8px;top:22px;width:9px;height:9px;border-radius:50%;background:#fdbc2e;box-shadow:inset 0 0 0 .5px #e0a028"></div><div class="a" style="left:546.7px;top:22px;width:9px;height:9px;border-radius:50%;background:#29c940;box-shadow:inset 0 0 0 .5px #1eaa30"></div><div class="xb a" style="left:565px;width:25.4px"></div><div class="xb a" style="left:596.6px;width:25.2px"></div><div class="xb a" style="left:628.2px;width:134.8px"></div><div class="xb a" style="left:769.6px;width:240px"></div>
<svg class="a" style="left:573.6px;top:22.2px" width="9" height="9" viewBox="0 0 9 9"><path d="M.6 .2L8.4 4.5L.6 8.8Z" fill="#4e4e4e"/></svg><div class="a" style="left:605.4px;top:22.6px;width:8px;height:8px;background:#b4b4b4"></div><svg class="a" style="left:631.6px;top:20.6px" width="11" height="11" viewBox="0 0 11 11"><path d="M5.4 .6L1 10.2M5.6 .6L10 10.2M2.4 7H8.6" stroke="#d48a3a" stroke-width="1.5" fill="none"/><path d="M.4 8.2L10.6 6.2" stroke="#8a8a8a" stroke-width="1"/><path d="M3.6 .6L7.8 8.6" stroke="#b0b0b0" stroke-width=".9"/></svg><div class="a" style="left:646px;top:19.8px;font-size:8.35px;line-height:13px;color:#2c2c2c;white-space:nowrap">Spin...oject</div><svg class="a" style="left:688.6px;top:21px" width="5" height="11" viewBox="0 0 5 11"><path d="M.6 .6L4.2 5.5L.6 10.4" fill="none" stroke="#9a9a9a" stroke-width=".9"/></svg><svg class="a" style="left:695.6px;top:21.4px" width="11" height="10" viewBox="0 0 11 10"><path d="M.4 1.6L7.6 .4L8 8L.8 9.4Z" fill="#3f8fe8"/><path d="M2 1.4L4 4L6 1" stroke="#9acbff" stroke-width=".8" fill="none"/><rect x="6.6" y="2.6" width="3.4" height="6.6" rx=".8" fill="#222"/></svg><div class="a" style="left:709.8px;top:19.8px;font-size:8.05px;line-height:13px;color:#2c2c2c;white-space:nowrap">iPhone 8 Plus</div>
<div class="a" style="left:775.2px;top:19.8px;font-size:8.1px;line-height:13px;color:#3a3a3a;white-space:nowrap">SpineSampleProject: <b style="color:#1e1e1e;font-size:8.3px;margin-left:-.6px">Ready</b></div><div class="a" style="left:883.4px;top:21.8px;width:1px;height:9.4px;background:#9a9a9a"></div><div class="a" style="left:890px;top:19.8px;font-size:8.4px;line-height:13px;color:#3a3a3a;white-space:nowrap">Today at 21:18</div>
<div class="a" style="left:509.6px;top:58.8px;width:190.6px;height:1px;background:#d4d4d4"></div><div class="a" style="left:700.2px;top:39.8px;width:1px;height:552.2px;background:#c6c6c6"></div><div class="a" style="left:701.2px;top:39.8px;width:300px;height:19px;background:#fbfbfb;border-bottom:1px solid #d6d6d6"></div><div class="a" style="left:860.4px;top:59.8px;width:1px;height:532.2px;background:#d2d2d2"></div><div class="a" style="left:861.4px;top:572px;width:140px;height:20px;background:#ececec"></div>
<svg class="a" style="left:514.8px;top:44.1px" width="11" height="11" viewBox="0 0 11 11"><path d="M.6 1.4Q.6 .6 1.4 .6H3.8L4.8 1.8H9.6Q10.4 1.8 10.4 2.6V9.4Q10.4 10.2 9.6 10.2H1.4Q.6 10.2 .6 9.4Z" fill="#fff" stroke="#1a7cf0" stroke-width="1.2"/><path d="M.6 4H10.4" stroke="#1a7cf0" stroke-width="1.2"/></svg><svg class="a" style="left:536.1px;top:44.1px" width="11" height="11" viewBox="0 0 11 11"><rect x=".9" y=".9" width="9.2" height="9.2" fill="none" stroke="#8a8a8a" stroke-width=".9"/><path d="M3.4 3.4L7.6 7.6M7.6 3.4L3.4 7.6" stroke="#8a8a8a" stroke-width=".9"/><rect x="4.3" y="4.3" width="2.4" height="2.4" fill="#f5f5f5" stroke="#8a8a8a" stroke-width=".8"/></svg><svg class="a" style="left:556.9px;top:44.1px" width="11" height="11" viewBox="0 0 11 11"><rect x="1.4" y=".8" width="8.2" height="3" fill="none" stroke="#8a8a8a" stroke-width=".9"/><rect x=".8" y="7.2" width="3.2" height="3" fill="none" stroke="#8a8a8a" stroke-width=".9"/><rect x="7" y="7.2" width="3.2" height="3" fill="none" stroke="#8a8a8a" stroke-width=".9"/><path d="M2.4 7.2V5.6H8.6V7.2M5.5 3.8V5.6" fill="none" stroke="#8a8a8a" stroke-width=".9"/></svg><svg class="a" style="left:577.7px;top:44.1px" width="11" height="11" viewBox="0 0 11 11"><circle cx="4.6" cy="4.6" r="3.4" fill="none" stroke="#8a8a8a" stroke-width="1"/><path d="M7 7L10.2 10.2" stroke="#8a8a8a" stroke-width="1.2"/></svg><svg class="a" style="left:599.0px;top:44.1px" width="11" height="11" viewBox="0 0 11 11"><path d="M5.5 .9L10.4 10H.6Z" fill="none" stroke="#8a8a8a" stroke-width=".9" stroke-linejoin="round"/><path d="M5.5 4V7" stroke="#8a8a8a" stroke-width=".9"/><rect x="5" y="7.9" width="1" height="1" fill="#8a8a8a"/></svg><svg class="a" style="left:620.3px;top:44.1px" width="11" height="11" viewBox="0 0 11 11"><path d="M5.5 .7L10.3 5.5L5.5 10.3L.7 5.5Z" fill="none" stroke="#8a8a8a" stroke-width=".9" stroke-linejoin="round"/><path d="M3.4 5.5H7.6" stroke="#8a8a8a" stroke-width=".9"/></svg><svg class="a" style="left:641.1px;top:44.1px" width="11" height="11" viewBox="0 0 11 11"><rect x=".6" y="1" width="9.8" height="1.6" fill="#a4a4a4"/><path d="M2 3.6V10M5.5 3.6V10M9 3.6V10" stroke="#b4b4b4" stroke-width="2.3"/><path d="M.6 6.8H10.4" stroke="#f5f5f5" stroke-width=".5"/></svg><svg class="a" style="left:661.9px;top:44.1px" width="11" height="11" viewBox="0 0 11 11"><path d="M.8 2.8H7.2L10.2 5.5L7.2 8.2H.8Z" fill="none" stroke="#8a8a8a" stroke-width=".9" stroke-linejoin="round"/></svg><svg class="a" style="left:683.0px;top:44.1px" width="11" height="11" viewBox="0 0 11 11"><path d="M1.6 .8H9.4Q10.2 .8 10.2 1.6V6.8Q10.2 7.6 9.4 7.6H4.8L2.6 9.8V7.6H1.6Q.8 7.6 .8 6.8V1.6Q.8 .8 1.6 .8Z" fill="none" stroke="#8a8a8a" stroke-width=".9"/><path d="M2.8 3H8.2M2.8 5.2H8.2" stroke="#8a8a8a" stroke-width=".8"/></svg>
<svg class="a" style="left:705.3px;top:44.1px" width="11" height="11" viewBox="0 0 11 11"><rect x=".8" y=".8" width="3.8" height="3.8" rx=".6" fill="none" stroke="#8a8a8a" stroke-width=".9"/><rect x="6.4" y=".8" width="3.8" height="3.8" rx=".6" fill="none" stroke="#8a8a8a" stroke-width=".9"/><rect x=".8" y="6.4" width="3.8" height="3.8" rx=".6" fill="none" stroke="#8a8a8a" stroke-width=".9"/><rect x="6.4" y="6.4" width="3.8" height="3.8" rx=".6" fill="none" stroke="#8a8a8a" stroke-width=".9"/></svg><svg class="a" style="left:722.1px;top:44.1px" width="11" height="11" viewBox="0 0 11 11"><path d="M7.4 1L3.2 5.5L7.4 10" fill="none" stroke="#9c9c9c" stroke-width="1"/></svg><svg class="a" style="left:737.9px;top:44.1px" width="11" height="11" viewBox="0 0 11 11"><path d="M3.6 1L7.8 5.5L3.6 10" fill="none" stroke="#9c9c9c" stroke-width="1"/></svg><svg class="a" style="left:755.8px;top:44px" width="9" height="11" viewBox="0 0 9 11"><path d="M.4 .4H6L8.6 3V10.6H.4Z" fill="#3d9af2"/><path d="M6 .4V3H8.6Z" fill="#a8d4ff"/><path d="M2.2 8.4L4.5 3.6L6.8 8.4M3 6.8H6" stroke="#d4ebff" stroke-width=".9" fill="none"/></svg><div class="a" style="left:768.4px;top:43.5px;font-size:8.15px;line-height:13px;color:#2c2c2c;white-space:nowrap">SpineSampleProject</div><svg class="a" style="left:845px;top:44px" width="5" height="11" viewBox="0 0 5 11"><path d="M.6 .6L4.2 5.5L.6 10.4" fill="none" stroke="#a4a4a4" stroke-width=".9"/></svg><svg class="a" style="left:851.4px;top:45px" width="11" height="9" viewBox="0 0 11 9"><path d="M.2 1Q.2 .3 1 .3H3.8L4.8 1.3H10Q10.8 1.3 10.8 2V8Q10.8 8.7 10 8.7H1Q.2 8.7 .2 8Z" fill="#f7c52b"/><path d="M.2 2.6H10.8V8Q10.8 8.7 10 8.7H1Q.2 8.7 .2 8Z" fill="#fdd23c"/></svg><div class="a" style="left:865.6px;top:43.5px;font-size:8.15px;line-height:13px;color:#2c2c2c;white-space:nowrap">SpineSa...leProject</div><svg class="a" style="left:936px;top:44px" width="5" height="11" viewBox="0 0 5 11"><path d="M.6 .6L4.2 5.5L.6 10.4" fill="none" stroke="#a4a4a4" stroke-width=".9"/></svg><svg class="a" style="left:942.4px;top:45px" width="11" height="9" viewBox="0 0 11 9"><path d="M.2 1Q.2 .3 1 .3H3.8L4.8 1.3H10Q10.8 1.3 10.8 2V8Q10.8 8.7 10 8.7H1Q.2 8.7 .2 8Z" fill="#5eb5ec"/><path d="M.2 2.6H10.8V8Q10.8 8.7 10 8.7H1Q.2 8.7 .2 8Z" fill="#7cc6f4"/></svg><div class="a" style="left:956.6px;top:43.5px;font-size:8.15px;line-height:13px;color:#2c2c2c;white-space:nowrap">Assets.xcassets</div>
<svg class="a" style="left:513.6px;top:64.4px" width="6.8" height="5.6" viewBox="0 0 6.8 5.6"><path d="M0 0H6.8L3.4 5.6Z" fill="#6e6e6e"/></svg><svg class="a" style="left:523.8px;top:61.4px" width="9" height="11" viewBox="0 0 9 11"><path d="M.4 .4H6L8.6 3V10.6H.4Z" fill="#3d9af2"/><path d="M6 .4V3H8.6Z" fill="#a8d4ff"/><path d="M2.2 8.4L4.5 3.6L6.8 8.4M3 6.8H6" stroke="#d4ebff" stroke-width=".9" fill="none"/></svg><div class="xt a" style="left:536px;top:60px">SpineSampleProject</div>
<svg class="a" style="left:523.2px;top:78.4px" width="6.8" height="5.6" viewBox="0 0 6.8 5.6"><path d="M0 0H6.8L3.4 5.6Z" fill="#6e6e6e"/></svg><svg class="a" style="left:532.6px;top:76.4px" width="11" height="9" viewBox="0 0 11 9"><path d="M.2 1Q.2 .3 1 .3H3.8L4.8 1.3H10Q10.8 1.3 10.8 2V8Q10.8 8.7 10 8.7H1Q.2 8.7 .2 8Z" fill="#f7c52b"/><path d="M.2 2.6H10.8V8Q10.8 8.7 10 8.7H1Q.2 8.7 .2 8Z" fill="#fdd23c"/></svg><div class="xt a" style="left:545.6px;top:74px">SpineSampleProject</div>
<svg class="a" style="left:544px;top:89.4px" width="9" height="11" viewBox="0 0 9 11"><path d="M.5 .5H5.8L8.5 3.2V10.5H.5Z" fill="#fff" stroke="#c4c4c4" stroke-width=".7"/><path d="M5.8 .5V3.2H8.5" fill="none" stroke="#c4c4c4" stroke-width=".7"/><path d="M1.8 4.6Q4 7 6.8 7.4Q5 8.6 2 7.6Q4 8 4.6 7.4Q2.6 6 1.8 4.6Z" fill="#f05a28"/><path d="M2 4.8L6.6 7.6L7.6 8.8" stroke="#f05a28" stroke-width="1" fill="none"/></svg><div class="xt a" style="left:555.6px;top:88px">AppDelegate.swift</div>
<svg class="a" style="left:544px;top:103.4px" width="9" height="11" viewBox="0 0 9 11"><path d="M.5 .5H5.8L8.5 3.2V10.5H.5Z" fill="#fff" stroke="#c4c4c4" stroke-width=".7"/><path d="M5.8 .5V3.2H8.5" fill="none" stroke="#c4c4c4" stroke-width=".7"/><circle cx="4.6" cy="6.4" r="2.2" fill="#e8703a"/><path d="M2.4 6.4A2.2 2.2 0 0 0 6.8 6.4Z" fill="#4a58c8"/><circle cx="4.6" cy="5" r=".9" fill="#f4c030"/></svg><div class="xt a" style="left:555.6px;top:102px">GameScene.sks</div>
<svg class="a" style="left:544px;top:117.4px" width="9" height="11" viewBox="0 0 9 11"><path d="M.5 .5H5.8L8.5 3.2V10.5H.5Z" fill="#fff" stroke="#c4c4c4" stroke-width=".7"/><path d="M5.8 .5V3.2H8.5" fill="none" stroke="#c4c4c4" stroke-width=".7"/><circle cx="4.6" cy="6.4" r="2.2" fill="#e8703a"/><path d="M2.4 6.4A2.2 2.2 0 0 0 6.8 6.4Z" fill="#4a58c8"/><circle cx="4.6" cy="5" r=".9" fill="#f4c030"/></svg><div class="xt a" style="left:555.6px;top:116px">Actions.sks</div>
<svg class="a" style="left:544px;top:131.4px" width="9" height="11" viewBox="0 0 9 11"><path d="M.5 .5H5.8L8.5 3.2V10.5H.5Z" fill="#fff" stroke="#c4c4c4" stroke-width=".7"/><path d="M5.8 .5V3.2H8.5" fill="none" stroke="#c4c4c4" stroke-width=".7"/><path d="M1.8 4.6Q4 7 6.8 7.4Q5 8.6 2 7.6Q4 8 4.6 7.4Q2.6 6 1.8 4.6Z" fill="#f05a28"/><path d="M2 4.8L6.6 7.6L7.6 8.8" stroke="#f05a28" stroke-width="1" fill="none"/></svg><div class="xt a" style="left:555.6px;top:130px">GameScene.swift</div>
<svg class="a" style="left:544px;top:145.4px" width="9" height="11" viewBox="0 0 9 11"><path d="M.5 .5H5.8L8.5 3.2V10.5H.5Z" fill="#fff" stroke="#c4c4c4" stroke-width=".7"/><path d="M5.8 .5V3.2H8.5" fill="none" stroke="#c4c4c4" stroke-width=".7"/><path d="M1.8 4.6Q4 7 6.8 7.4Q5 8.6 2 7.6Q4 8 4.6 7.4Q2.6 6 1.8 4.6Z" fill="#f05a28"/><path d="M2 4.8L6.6 7.6L7.6 8.8" stroke="#f05a28" stroke-width="1" fill="none"/></svg><div class="xt a" style="left:555.6px;top:144px">GameViewController.swift</div>
<svg class="a" style="left:544px;top:159.4px" width="9" height="11" viewBox="0 0 9 11"><path d="M.5 .5H5.8L8.5 3.2V10.5H.5Z" fill="#fff" stroke="#c4c4c4" stroke-width=".7"/><path d="M5.8 .5V3.2H8.5" fill="none" stroke="#c4c4c4" stroke-width=".7"/><rect x="2" y="3.4" width="4" height="5.4" fill="none" stroke="#e8a020" stroke-width="1"/><path d="M4 5.4L6.4 7" stroke="#e8a020" stroke-width="1"/></svg><div class="xt a" style="left:555.6px;top:158px">Main.storyboard</div>
<div class="a" style="left:509.6px;top:171.6px;width:190.6px;height:13.8px;background:#d3d3d3"></div><div class="xt a" style="left:689.4px;top:172px;color:#4a4a4a">M</div><svg class="a" style="left:543px;top:174.4px" width="11" height="9" viewBox="0 0 11 9"><path d="M.2 1Q.2 .3 1 .3H3.8L4.8 1.3H10Q10.8 1.3 10.8 2V8Q10.8 8.7 10 8.7H1Q.2 8.7 .2 8Z" fill="#4aa8ea"/><path d="M.2 2.6H10.8V8Q10.8 8.7 10 8.7H1Q.2 8.7 .2 8Z" fill="#72c0f6"/></svg><div class="xt a" style="left:555.6px;top:172px">Assets.xcassets</div>
<svg class="a" style="left:544px;top:187.4px" width="9" height="11" viewBox="0 0 9 11"><path d="M.5 .5H5.8L8.5 3.2V10.5H.5Z" fill="#fff" stroke="#c4c4c4" stroke-width=".7"/><path d="M5.8 .5V3.2H8.5" fill="none" stroke="#c4c4c4" stroke-width=".7"/><rect x="2" y="3.4" width="4" height="5.4" fill="none" stroke="#e8a020" stroke-width="1"/><path d="M4 5.4L6.4 7" stroke="#e8a020" stroke-width="1"/></svg><div class="xt a" style="left:555.6px;top:186px">LaunchScreen.storyboard</div>
<svg class="a" style="left:544px;top:201.4px" width="9" height="11" viewBox="0 0 9 11"><path d="M.5 .5H5.8L8.5 3.2V10.5H.5Z" fill="#fff" stroke="#c4c4c4" stroke-width=".7"/><path d="M5.8 .5V3.2H8.5" fill="none" stroke="#c4c4c4" stroke-width=".7"/><path d="M1.8 4.4H7.2M1.8 6H7.2M1.8 7.6H7.2M3.6 3.6V9M5.4 3.6V9" stroke="#b8b8b8" stroke-width=".7"/></svg><div class="xt a" style="left:555.6px;top:200px">Info.plist</div>
<svg class="a" style="left:524.0px;top:217.6px" width="5.6" height="6.8" viewBox="0 0 5.6 6.8"><path d="M0 0L5.6 3.4L0 6.8Z" fill="#6e6e6e"/></svg><svg class="a" style="left:532.6px;top:216.4px" width="11" height="9" viewBox="0 0 11 9"><path d="M.2 1Q.2 .3 1 .3H3.8L4.8 1.3H10Q10.8 1.3 10.8 2V8Q10.8 8.7 10 8.7H1Q.2 8.7 .2 8Z" fill="#f7c52b"/><path d="M.2 2.6H10.8V8Q10.8 8.7 10 8.7H1Q.2 8.7 .2 8Z" fill="#fdd23c"/></svg><div class="xt a" style="left:545.6px;top:214px">Products</div>
<svg class="a" style="left:515.6px;top:578.2px" width="9" height="9" viewBox="0 0 9 9"><path d="M4.5 .4V8.6M.4 4.5H8.6" stroke="#6a6a6a" stroke-width=".9"/></svg><div class="flt a" style="left:530px;top:575.2px;width:166.4px"></div><svg class="a" style="left:533.4px;top:578.2px" width="8.4" height="8.4" viewBox="0 0 8.4 8.4"><circle cx="4.2" cy="4.2" r="3.7" fill="none" stroke="#8a8a8a" stroke-width=".8"/><path d="M2 3H6.4L4.2 6.2Z" fill="#8a8a8a"/></svg><div class="a" style="left:545.6px;top:577.2px;font-size:8.4px;line-height:10.6px;color:#c2c2c2">Filter</div><svg class="a" style="left:671.4px;top:578.4px" width="8.4" height="8.4" viewBox="0 0 8.4 8.4"><circle cx="4.2" cy="4.2" r="3.7" fill="none" stroke="#7a7a7a" stroke-width=".8"/><path d="M4.2 2V4.4L5.8 5.6" fill="none" stroke="#7a7a7a" stroke-width=".8"/></svg><svg class="a" style="left:683.4px;top:578.2px" width="8.6" height="8.6" viewBox="0 0 8.6 8.6"><rect x=".5" y=".5" width="7.6" height="7.6" fill="none" stroke="#7a7a7a" stroke-width=".9"/><path d="M2.4 2.4L6.2 6.2M6.2 2.4L2.4 6.2" stroke="#7a7a7a" stroke-width=".8"/><rect x="3.3" y="3.3" width="2" height="2" fill="#f5f5f5" stroke="#7a7a7a" stroke-width=".6"/></svg>
<div class="a" style="left:700px;top:71.6px;width:162px;height:355.4px;background:#fdf1ec"></div><div class="a" style="left:719px;top:61.6px;width:9.6px;height:9.6px;border:1px dotted #bdbdbd;border-radius:1.5px;background:#fff"></div><div class="xa a" style="left:731.6px;top:59.9px">AppIcon</div>
<svg class="a" style="left:705.6px;top:77.00000000000001px" width="6.8" height="5.6" viewBox="0 0 6.8 5.6"><path d="M0 0H6.8L3.4 5.6Z" fill="#727272"/></svg><svg class="a" style="left:718.2px;top:75.0px" width="11" height="9" viewBox="0 0 11 9"><path d="M.2 1Q.2 .3 1 .3H3.8L4.8 1.3H10Q10.8 1.3 10.8 2V8Q10.8 8.7 10 8.7H1Q.2 8.7 .2 8Z" fill="#5eb5ec"/><path d="M.2 2.6H10.8V8Q10.8 8.7 10 8.7H1Q.2 8.7 .2 8Z" fill="#7cc6f4"/></svg><div class="xa a" style="left:731.6px;top:72.95px">Goblins</div>
<div class="a" style="left:701.2px;top:87.15px;width:159.2px;height:12.1px;background:#1f62d3"></div><svg class="a" style="left:717.0px;top:90.30000000000001px" width="6.8" height="5.6" viewBox="0 0 6.8 5.6"><path d="M0 0H6.8L3.4 5.6Z" fill="#fff"/></svg><svg class="a" style="left:729.6px;top:88.3px" width="11" height="9" viewBox="0 0 11 9"><path d="M.2 1Q.2 .3 1 .3H3.8L4.8 1.3H10Q10.8 1.3 10.8 2V8Q10.8 8.7 10 8.7H1Q.2 8.7 .2 8Z" fill="#5eb5ec"/><path d="M.2 2.6H10.8V8Q10.8 8.7 10 8.7H1Q.2 8.7 .2 8Z" fill="#7cc6f4"/></svg><div class="xa a" style="left:743px;top:86.25px;color:#fff">default</div>
<div class="a" style="left:744.00px;top:100.70px;width:5.2px;height:11px;background:#fcfcfc;border:.8px solid #d2d2d2;border-radius:1.4px"></div><svg class="a" style="left:741.6px;top:101.2px" width="10" height="10" viewBox="0 0 10 10"><path d="M5 1.6V8.4" stroke="#a8a498" stroke-width="1.2"/></svg><div class="xa a" style="left:754px;top:99.55px">dagger</div>
<div class="a" style="left:741.50px;top:114.40px;width:10.2px;height:10.2px;background:#fcfcfc;border:.8px solid #d2d2d2;border-radius:1.4px"></div><svg class="a" style="left:741.6px;top:114.5px" width="10" height="10" viewBox="0 0 10 10"><circle cx="5" cy="5" r="3.2" fill="#6e5238"/></svg><div class="xa a" style="left:754px;top:112.85px">shield</div>
<div class="a" style="left:744.00px;top:127.30px;width:5.2px;height:11px;background:#fcfcfc;border:.8px solid #d2d2d2;border-radius:1.4px"></div><svg class="a" style="left:741.6px;top:127.80000000000001px" width="10" height="10" viewBox="0 0 10 10"><path d="M5 1.4V8.6" stroke="#d8d4cc" stroke-width=".7"/></svg><div class="xa a" style="left:754px;top:126.15px">spear</div>
<svg class="a" style="left:717.0px;top:143.5px" width="6.8" height="5.6" viewBox="0 0 6.8 5.6"><path d="M0 0H6.8L3.4 5.6Z" fill="#727272"/></svg><svg class="a" style="left:729.6px;top:141.5px" width="11" height="9" viewBox="0 0 11 9"><path d="M.2 1Q.2 .3 1 .3H3.8L4.8 1.3H10Q10.8 1.3 10.8 2V8Q10.8 8.7 10 8.7H1Q.2 8.7 .2 8Z" fill="#5eb5ec"/><path d="M.2 2.6H10.8V8Q10.8 8.7 10 8.7H1Q.2 8.7 .2 8Z" fill="#7cc6f4"/></svg><div class="xa a" style="left:743px;top:139.45px">goblin</div>
<div class="a" style="left:741.20px;top:155.90px;width:10.8px;height:7px;background:#fcfcfc;border:.8px solid #d2d2d2;border-radius:1.4px"></div><svg class="a" style="left:741.6px;top:154.4px" width="10" height="10" viewBox="0 0 10 10"><path d="M2.2 5H4.2M5.8 5H7.8" stroke="#5a5a3a" stroke-width="1"/></svg><div class="xa a" style="left:754px;top:152.75px">eyes-closed</div>
<div class="a" style="left:741.20px;top:169.20px;width:10.8px;height:7px;background:#fcfcfc;border:.8px solid #d2d2d2;border-radius:1.4px"></div><svg class="a" style="left:741.6px;top:167.7px" width="10" height="10" viewBox="0 0 10 10"><path d="M2.4 5.6Q3.4 3.6 6 4L7.8 5.4L6 6.6H3Z" fill="#6e7030"/></svg><div class="xa a" style="left:754px;top:166.05px">head</div>
<div class="a" style="left:741.50px;top:180.90px;width:10.2px;height:10.2px;background:#fcfcfc;border:.8px solid #d2d2d2;border-radius:1.4px"></div><svg class="a" style="left:741.6px;top:181.0px" width="10" height="10" viewBox="0 0 10 10"><path d="M2.2 3L7.6 6.8" stroke="#6e7030" stroke-width="2"/></svg><div class="xa a" style="left:754px;top:179.35px">left-arm</div>
<div class="a" style="left:741.20px;top:195.80px;width:10.8px;height:7px;background:#fcfcfc;border:.8px solid #d2d2d2;border-radius:1.4px"></div><svg class="a" style="left:741.6px;top:194.3px" width="10" height="10" viewBox="0 0 10 10"><path d="M2.2 6.4Q4.6 3.6 5.6 5L8 6.4Z" fill="#6e7030"/></svg><div class="xa a" style="left:754px;top:192.65px">left-foot</div>
<div class="a" style="left:741.50px;top:207.50px;width:10.2px;height:10.2px;background:#fcfcfc;border:.8px solid #d2d2d2;border-radius:1.4px"></div><svg class="a" style="left:741.6px;top:207.6px" width="10" height="10" viewBox="0 0 10 10"><path d="M3 2.6L6.6 2.4L7.2 6L5 8L3 6.4Z" fill="#6e7030"/></svg><div class="xa a" style="left:754px;top:205.95px">left-hand</div>
<div class="a" style="left:744.00px;top:220.40px;width:5.2px;height:11px;background:#fcfcfc;border:.8px solid #d2d2d2;border-radius:1.4px"></div><svg class="a" style="left:741.6px;top:220.9px" width="10" height="10" viewBox="0 0 10 10"><path d="M5.2 2V8" stroke="#6e7030" stroke-width="1.5"/></svg><div class="xa a" style="left:754px;top:219.25px">left-lower-leg</div>
<div class="a" style="left:744.00px;top:233.70px;width:5.2px;height:11px;background:#fcfcfc;border:.8px solid #d2d2d2;border-radius:1.4px"></div><svg class="a" style="left:741.6px;top:234.2px" width="10" height="10" viewBox="0 0 10 10"><path d="M4 2.2L6 7.8" stroke="#6e7030" stroke-width="1.6"/></svg><div class="xa a" style="left:754px;top:232.55px">left-shoulder</div>
<div class="a" style="left:744.00px;top:247.00px;width:5.2px;height:11px;background:#fcfcfc;border:.8px solid #d2d2d2;border-radius:1.4px"></div><svg class="a" style="left:741.6px;top:247.5px" width="10" height="10" viewBox="0 0 10 10"><path d="M5 2.4V7.6" stroke="#6e7030" stroke-width="1.8"/></svg><div class="xa a" style="left:754px;top:245.85px">left-upper-leg</div>
<div class="a" style="left:741.50px;top:260.70px;width:10.2px;height:10.2px;background:#fcfcfc;border:.8px solid #d2d2d2;border-radius:1.4px"></div><svg class="a" style="left:741.6px;top:260.8px" width="10" height="10" viewBox="0 0 10 10"><path d="M3.4 2.4H6.6L6.2 4.6L7.2 7.6H2.8L3.8 4.6Z" fill="#5e5c34"/></svg><div class="xa a" style="left:754px;top:259.15px">neck</div>
<div class="a" style="left:741.20px;top:275.60px;width:10.8px;height:7px;background:#fcfcfc;border:.8px solid #d2d2d2;border-radius:1.4px"></div><svg class="a" style="left:741.6px;top:274.1px" width="10" height="10" viewBox="0 0 10 10"><path d="M2.4 3.8H7.6L5 6.8Z" fill="#5e5c34"/></svg><div class="xa a" style="left:754px;top:272.45px">pelvis</div>
<div class="a" style="left:744.00px;top:286.90px;width:5.2px;height:11px;background:#fcfcfc;border:.8px solid #d2d2d2;border-radius:1.4px"></div><svg class="a" style="left:741.6px;top:287.4px" width="10" height="10" viewBox="0 0 10 10"><path d="M5.4 2.2L4.6 7.8" stroke="#6e7030" stroke-width="1.6"/></svg><div class="xa a" style="left:754px;top:285.75px">right-arm</div>
<div class="a" style="left:741.20px;top:302.20px;width:10.8px;height:7px;background:#fcfcfc;border:.8px solid #d2d2d2;border-radius:1.4px"></div><svg class="a" style="left:741.6px;top:300.7px" width="10" height="10" viewBox="0 0 10 10"><path d="M2 6.4Q4 3.4 5.4 4.8L8 6.4Z" fill="#6e7030"/></svg><div class="xa a" style="left:754px;top:299.05px">right-foot</div>
<div class="a" style="left:741.50px;top:313.90px;width:10.2px;height:10.2px;background:#fcfcfc;border:.8px solid #d2d2d2;border-radius:1.4px"></div><svg class="a" style="left:741.6px;top:314.0px" width="10" height="10" viewBox="0 0 10 10"><path d="M3 3.4L5.4 2.2L7.2 4.2L6.4 7.2L3.6 7.4Z" fill="#6e7030"/></svg><div class="xa a" style="left:754px;top:312.35px">right-hand</div>
<div class="a" style="left:744.00px;top:326.80px;width:5.2px;height:11px;background:#fcfcfc;border:.8px solid #d2d2d2;border-radius:1.4px"></div><svg class="a" style="left:741.6px;top:327.3px" width="10" height="10" viewBox="0 0 10 10"><path d="M5.2 2.2L4.8 7.8" stroke="#6e7030" stroke-width="1.3"/></svg><div class="xa a" style="left:754px;top:325.65px">right-lower-leg</div>
<div class="a" style="left:744.00px;top:340.10px;width:5.2px;height:11px;background:#fcfcfc;border:.8px solid #d2d2d2;border-radius:1.4px"></div><svg class="a" style="left:741.6px;top:340.6px" width="10" height="10" viewBox="0 0 10 10"><path d="M6 2.4L4 7.6" stroke="#6e7030" stroke-width="1.6"/></svg><div class="xa a" style="left:754px;top:338.95px">right-shoulder</div>
<div class="a" style="left:744.00px;top:353.40px;width:5.2px;height:11px;background:#fcfcfc;border:.8px solid #d2d2d2;border-radius:1.4px"></div><svg class="a" style="left:741.6px;top:353.9px" width="10" height="10" viewBox="0 0 10 10"><path d="M5.2 2.2L4.8 7.8" stroke="#6e7030" stroke-width="1.9"/></svg><div class="xa a" style="left:754px;top:352.25px">right-upper-leg</div>
<div class="a" style="left:741.50px;top:367.10px;width:10.2px;height:10.2px;background:#fcfcfc;border:.8px solid #d2d2d2;border-radius:1.4px"></div><svg class="a" style="left:741.6px;top:367.2px" width="10" height="10" viewBox="0 0 10 10"><path d="M3.2 2.2L6 2.6L7 7.6L4 7.8Z" fill="#5e5c34"/></svg><div class="xa a" style="left:754px;top:365.55px">torso</div>
<div class="a" style="left:741.20px;top:382.00px;width:10.8px;height:7px;background:#fcfcfc;border:.8px solid #d2d2d2;border-radius:1.4px"></div><svg class="a" style="left:741.6px;top:380.5px" width="10" height="10" viewBox="0 0 10 10"><path d="M2.4 4.6L7.6 5.6" stroke="#b8b4a4" stroke-width=".8"/></svg><div class="xa a" style="left:754px;top:378.85px">undie-straps</div>
<div class="a" style="left:741.50px;top:393.70px;width:10.2px;height:10.2px;background:#fcfcfc;border:.8px solid #d2d2d2;border-radius:1.4px"></div><svg class="a" style="left:741.6px;top:393.8px" width="10" height="10" viewBox="0 0 10 10"><path d="M2.4 3.2H7.6L5 7.2Z" fill="#4a3c28"/></svg><div class="xa a" style="left:754px;top:392.15px">undies</div>
<svg class="a" style="left:718.0px;top:408.7px" width="5.6" height="6.8" viewBox="0 0 5.6 6.8"><path d="M0 0L5.6 3.4L0 6.8Z" fill="#727272"/></svg><svg class="a" style="left:729.6px;top:407.5px" width="11" height="9" viewBox="0 0 11 9"><path d="M.2 1Q.2 .3 1 .3H3.8L4.8 1.3H10Q10.8 1.3 10.8 2V8Q10.8 8.7 10 8.7H1Q.2 8.7 .2 8Z" fill="#5eb5ec"/><path d="M.2 2.6H10.8V8Q10.8 8.7 10 8.7H1Q.2 8.7 .2 8Z" fill="#7cc6f4"/></svg><div class="xa a" style="left:743px;top:405.45px">goblingirl</div>
<svg class="a" style="left:705.6px;top:578.2px" width="9" height="9" viewBox="0 0 9 9"><path d="M4.5 .4V8.6M.4 4.5H8.6" stroke="#5a5a5a" stroke-width=".9"/></svg><svg class="a" style="left:723.6px;top:578.2px" width="9" height="9" viewBox="0 0 9 9"><path d="M.4 4.5H8.6" stroke="#5a5a5a" stroke-width=".9"/></svg><div class="flt a" style="left:739.6px;top:575.2px;width:117px;background:#fff"></div><svg class="a" style="left:743px;top:578.2px" width="8.4" height="8.4" viewBox="0 0 8.4 8.4"><circle cx="4.2" cy="4.2" r="3.7" fill="none" stroke="#8a8a8a" stroke-width=".8"/><path d="M2 3H6.4L4.2 6.2Z" fill="#8a8a8a"/></svg><div class="a" style="left:754.8px;top:577.2px;font-size:8.4px;line-height:10.6px;color:#c6c6c6">Filter</div>
<div class="xh a" style="left:869.6px;top:65px">Goblins/default/dagger</div><div class="xs a" style="left:919.6px;top:138.6px">1x</div><div class="xs a" style="left:986.6px;top:138.6px">2x</div><div class="hl a" style="left:879px;top:151px;width:125px"></div><div class="xu a" style="left:974px;top:156px">Universal</div><div class="hl a" style="left:867px;top:177.2px;width:135px;background:#e6e6e6"></div>
<div class="xh a" style="left:869.6px;top:197px">Goblins/default/shield</div><div class="xs a" style="left:919.6px;top:269.6px">1x</div><div class="xs a" style="left:986.6px;top:269.6px">2x</div><div class="hl a" style="left:879px;top:283px;width:125px"></div><div class="xu a" style="left:974px;top:288px">Universal</div><div class="hl a" style="left:867px;top:309.2px;width:135px;background:#e6e6e6"></div>
<div class="xh a" style="left:869.6px;top:328px">Goblins/default/spear</div><div class="xs a" style="left:919.6px;top:401.6px">1x</div><div class="xs a" style="left:986.6px;top:401.6px">2x</div><div class="hl a" style="left:879px;top:414.4px;width:125px"></div><div class="xu a" style="left:974px;top:419.4px">Universal</div>
<svg class="a" style="left:917.1px;top:83px" width="12" height="50" viewBox="0 0 12 50"><path d="M4 22.6H9Q10.2 34 7.6 42Q5.6 47.6 3 50.2Q3.8 44 3.2 36Q3.4 28 4 22.6Z" fill="#aaaeb2" stroke="#74787c" stroke-width=".4"/><path d="M7.4 23Q8.6 33 6.6 41Q5.4 45 4 47.6" stroke="#e4e6e8" stroke-width="1.1" fill="none"/><path d="M4.6 24Q4.4 34 4.2 44" stroke="#84888c" stroke-width=".7" fill="none"/><path d="M3.6 20L4 5Q4 1 7 .6Q10 .4 10.4 2.6Q10.4 4.6 8.6 5.4L8.6 20Z" fill="#9e9062" stroke="#6a5c36" stroke-width=".4"/><path d="M4 7.4H8.6M4 9.8H8.6M4 12.2H8.6M4 14.6H8.6M4 17H8.6" stroke="#6e6040" stroke-width=".6"/><path d="M5 2.6Q6.6 1.4 8.8 2" stroke="#c4b888" stroke-width=".9" fill="none"/><path d="M.3 21Q6 18.2 11.9 21Q11.8 23.4 6 23.4Q.4 23.4 .3 21Z" fill="#95875a" stroke="#5e5230" stroke-width=".4"/></svg><svg class="a" style="left:984.6px;top:83px" width="12" height="50" viewBox="0 0 12 50"><path d="M4 22.6H9Q10.2 34 7.6 42Q5.6 47.6 3 50.2Q3.8 44 3.2 36Q3.4 28 4 22.6Z" fill="#aaaeb2" stroke="#74787c" stroke-width=".4"/><path d="M7.4 23Q8.6 33 6.6 41Q5.4 45 4 47.6" stroke="#e4e6e8" stroke-width="1.1" fill="none"/><path d="M4.6 24Q4.4 34 4.2 44" stroke="#84888c" stroke-width=".7" fill="none"/><path d="M3.6 20L4 5Q4 1 7 .6Q10 .4 10.4 2.6Q10.4 4.6 8.6 5.4L8.6 20Z" fill="#9e9062" stroke="#6a5c36" stroke-width=".4"/><path d="M4 7.4H8.6M4 9.8H8.6M4 12.2H8.6M4 14.6H8.6M4 17H8.6" stroke="#6e6040" stroke-width=".6"/><path d="M5 2.6Q6.6 1.4 8.8 2" stroke="#c4b888" stroke-width=".9" fill="none"/><path d="M.3 21Q6 18.2 11.9 21Q11.8 23.4 6 23.4Q.4 23.4 .3 21Z" fill="#95875a" stroke="#5e5230" stroke-width=".4"/></svg><svg class="a" style="left:899.0px;top:214.5px" width="49" height="49" viewBox="0 0 49 49"><defs><clipPath id="sc923"><circle cx="24.3" cy="24.2" r="21.4"/></clipPath></defs><circle cx="24.5" cy="24.5" r="24.2" fill="#4c4a46"/><circle cx="24.9" cy="25" r="23" fill="#5e5c58"/><circle cx="24.3" cy="24.2" r="22.2" fill="#3c3a34"/><g clip-path="url(#sc923)"><g transform="rotate(-31 24.5 24.5)"><rect x="-10" y="-7" width="70" height="7.2" fill="#6a6440"/><rect x="-10" y="0" width="70" height="7.2" fill="#7c7648"/><rect x="-10" y="7" width="70" height="7.2" fill="#6e6842"/><rect x="-10" y="14" width="70" height="7.2" fill="#878154"/><rect x="-10" y="21" width="70" height="7.2" fill="#726c46"/><rect x="-10" y="28" width="70" height="7.2" fill="#7e8a82"/><rect x="-10" y="35" width="70" height="7.2" fill="#7a7448"/><rect x="-10" y="42" width="70" height="7.2" fill="#6a6440"/><rect x="-10" y="49" width="70" height="7.2" fill="#746e46"/><path d="M-10 0H60" stroke="#4a4430" stroke-width=".7" opacity=".8"/><path d="M-10 7H60" stroke="#4a4430" stroke-width=".7" opacity=".8"/><path d="M-10 14H60" stroke="#4a4430" stroke-width=".7" opacity=".8"/><path d="M-10 21H60" stroke="#4a4430" stroke-width=".7" opacity=".8"/><path d="M-10 28H60" stroke="#4a4430" stroke-width=".7" opacity=".8"/><path d="M-10 35H60" stroke="#4a4430" stroke-width=".7" opacity=".8"/><path d="M-10 42H60" stroke="#4a4430" stroke-width=".7" opacity=".8"/><path d="M-10 49H60" stroke="#4a4430" stroke-width=".7" opacity=".8"/><rect x="-4" y="28" width="30" height="3.4" fill="#8a9a94" opacity=".7"/><rect x="30" y="21" width="22" height="3" fill="#9aa6a0" opacity=".6"/></g><path d="M6.4 17.6Q6 14 10 12.4L14.6 9.6Q18.6 7.4 20.4 9.6Q21.6 12 19.2 14.4Q16.8 17.2 13.4 18.6Q9 20.8 6.4 17.6Z" fill="#d4532a"/><path d="M29.6 26.4Q33.4 24.6 35.4 27.6Q36 31 32.6 32.6Q29.8 33.4 28.4 31Z" fill="#cf5028"/><path d="M34.6 37.8Q37.6 34.4 40.6 35.6Q41.2 38.4 38 40.2Q35.6 40.8 34.6 37.8Z" fill="#cf5028"/></g><circle cx="24.3" cy="23.8" r="8.6" fill="#565658"/><path d="M24.3 16.6A7.2 7.2 0 0 0 24.3 31Q22 27 26 24Q28 20 24.3 16.6Z" fill="#d4562a"/><path d="M26.5 17A7.2 7.2 0 0 1 26 30.8Q30 27 29.4 23.6Q29.4 19.6 26.5 17Z" fill="#6e6e70"/><circle cx="24.5" cy="23.8" r="3.3" fill="#8c8e92"/><circle cx="24" cy="23" r="1.5" fill="#e0e2e6"/></svg><svg class="a" style="left:966.7px;top:214.5px" width="49" height="49" viewBox="0 0 49 49"><defs><clipPath id="sc991"><circle cx="24.3" cy="24.2" r="21.4"/></clipPath></defs><circle cx="24.5" cy="24.5" r="24.2" fill="#4c4a46"/><circle cx="24.9" cy="25" r="23" fill="#5e5c58"/><circle cx="24.3" cy="24.2" r="22.2" fill="#3c3a34"/><g clip-path="url(#sc991)"><g transform="rotate(-31 24.5 24.5)"><rect x="-10" y="-7" width="70" height="7.2" fill="#6a6440"/><rect x="-10" y="0" width="70" height="7.2" fill="#7c7648"/><rect x="-10" y="7" width="70" height="7.2" fill="#6e6842"/><rect x="-10" y="14" width="70" height="7.2" fill="#878154"/><rect x="-10" y="21" width="70" height="7.2" fill="#726c46"/><rect x="-10" y="28" width="70" height="7.2" fill="#7e8a82"/><rect x="-10" y="35" width="70" height="7.2" fill="#7a7448"/><rect x="-10" y="42" width="70" height="7.2" fill="#6a6440"/><rect x="-10" y="49" width="70" height="7.2" fill="#746e46"/><path d="M-10 0H60" stroke="#4a4430" stroke-width=".7" opacity=".8"/><path d="M-10 7H60" stroke="#4a4430" stroke-width=".7" opacity=".8"/><path d="M-10 14H60" stroke="#4a4430" stroke-width=".7" opacity=".8"/><path d="M-10 21H60" stroke="#4a4430" stroke-width=".7" opacity=".8"/><path d="M-10 28H60" stroke="#4a4430" stroke-width=".7" opacity=".8"/><path d="M-10 35H60" stroke="#4a4430" stroke-width=".7" opacity=".8"/><path d="M-10 42H60" stroke="#4a4430" stroke-width=".7" opacity=".8"/><path d="M-10 49H60" stroke="#4a4430" stroke-width=".7" opacity=".8"/><rect x="-4" y="28" width="30" height="3.4" fill="#8a9a94" opacity=".7"/><rect x="30" y="21" width="22" height="3" fill="#9aa6a0" opacity=".6"/></g><path d="M6.4 17.6Q6 14 10 12.4L14.6 9.6Q18.6 7.4 20.4 9.6Q21.6 12 19.2 14.4Q16.8 17.2 13.4 18.6Q9 20.8 6.4 17.6Z" fill="#d4532a"/><path d="M29.6 26.4Q33.4 24.6 35.4 27.6Q36 31 32.6 32.6Q29.8 33.4 28.4 31Z" fill="#cf5028"/><path d="M34.6 37.8Q37.6 34.4 40.6 35.6Q41.2 38.4 38 40.2Q35.6 40.8 34.6 37.8Z" fill="#cf5028"/></g><circle cx="24.3" cy="23.8" r="8.6" fill="#565658"/><path d="M24.3 16.6A7.2 7.2 0 0 0 24.3 31Q22 27 26 24Q28 20 24.3 16.6Z" fill="#d4562a"/><path d="M26.5 17A7.2 7.2 0 0 1 26 30.8Q30 27 29.4 23.6Q29.4 19.6 26.5 17Z" fill="#6e6e70"/><circle cx="24.5" cy="23.8" r="3.3" fill="#8c8e92"/><circle cx="24" cy="23" r="1.5" fill="#e0e2e6"/></svg><svg class="a" style="left:921.4px;top:346.6px" width="4" height="50" viewBox="0 0 4 50"><path d="M2 9V49.6" stroke="#6e6250" stroke-width=".9"/><path d="M2 .2L3.2 5.6L2 8.4L.8 5.6Z" fill="#7c8086"/><path d="M1.4 8.2H2.6V10.4H1.4Z" fill="#a09078"/></svg><svg class="a" style="left:988.6px;top:346.6px" width="4" height="50" viewBox="0 0 4 50"><path d="M2 9V49.6" stroke="#6e6250" stroke-width=".9"/><path d="M2 .2L3.2 5.6L2 8.4L.8 5.6Z" fill="#7c8086"/><path d="M1.4 8.2H2.6V10.4H1.4Z" fill="#a09078"/></svg>
<div class="a" style="left:698.9px;top:70.9px;width:164.2px;height:356.9px;border:1.7px solid #f25a0c"></div>
</div>
</body></html>
